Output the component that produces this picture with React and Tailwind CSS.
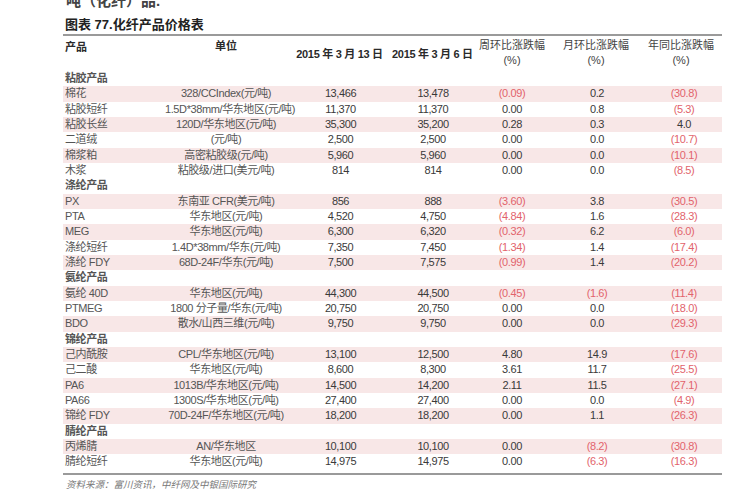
const sections = [
  {
    name: "粘胶产品",
    rows: [
      ["棉花", "328/CCIndex(元/吨)", "13,466", "13,478", "(0.09)", "0.2", "(30.8)"],
      ["粘胶短纤", "1.5D*38mm/华东地区(元/吨)", "11,370", "11,370", "0.00", "0.8", "(5.3)"],
      ["粘胶长丝", "120D/华东地区(元/吨)", "35,300", "35,200", "0.28", "0.3", "4.0"],
      ["二道绒", "(元/吨)", "2,500", "2,500", "0.00", "0.0", "(10.7)"],
      ["棉浆粕", "高密粘胶级(元/吨)", "5,960", "5,960", "0.00", "0.0", "(10.1)"],
      ["木浆", "粘胶级/进口(美元/吨)", "814", "814", "0.00", "0.0", "(8.5)"],
    ],
  },
  {
    name: "涤纶产品",
    rows: [
      ["PX", "东南亚 CFR(美元/吨)", "856", "888", "(3.60)", "3.8", "(30.5)"],
      ["PTA", "华东地区(元/吨)", "4,520", "4,750", "(4.84)", "1.6", "(28.3)"],
      ["MEG", "华东地区(元/吨)", "6,300", "6,320", "(0.32)", "6.2", "(6.0)"],
      ["涤纶短纤", "1.4D*38mm/华东(元/吨)", "7,350", "7,450", "(1.34)", "1.4", "(17.4)"],
      ["涤纶 FDY", "68D-24F/华东(元/吨)", "7,500", "7,575", "(0.99)", "1.4", "(20.2)"],
    ],
  },
  {
    name: "氨纶产品",
    rows: [
      ["氨纶 40D", "华东地区(元/吨)", "44,300", "44,500", "(0.45)", "(1.6)", "(11.4)"],
      ["PTMEG", "1800 分子量/华东(元/吨)", "20,750", "20,750", "0.00", "0.0", "(18.0)"],
      ["BDO", "散水/山西三维(元/吨)", "9,750", "9,750", "0.00", "0.0", "(29.3)"],
    ],
  },
  {
    name: "锦纶产品",
    rows: [
      ["己内酰胺", "CPL/华东地区(元/吨)", "13,100", "12,500", "4.80", "14.9", "(17.6)"],
      ["己二酸", "华东地区(元/吨)", "8,600", "8,300", "3.61", "11.7", "(25.5)"],
      ["PA6", "1013B/华东地区(元/吨)", "14,500", "14,200", "2.11", "11.5", "(27.1)"],
      ["PA66", "1300S/华东地区(元/吨)", "27,400", "27,400", "0.00", "0.0", "(4.9)"],
      ["锦纶 FDY", "70D-24F/华东地区(元/吨)", "18,200", "18,200", "0.00", "1.1", "(26.3)"],
    ],
  },
  {
    name: "腈纶产品",
    rows: [
      ["丙烯腈", "AN/华东地区", "10,100", "10,100", "0.00", "(8.2)", "(30.8)"],
      ["腈纶短纤", "华东地区(元/吨)", "14,975", "14,975", "0.00", "(6.3)", "(16.3)"],
    ],
  },
];

const grid = "grid grid-cols-[102px_122px_105px_80px_80px_88px_82px]";

const Cell = ({ v, className = "" }) => (
  <span className={`text-center ${v.startsWith("(") ? "text-[#e2636c]" : "text-[#3a3a3a]"} ${className}`}>{v}</span>
);

const App = () => {
  return (
    <div className="w-[750px] h-[500px] overflow-hidden bg-white pl-[63px] font-['Liberation_Sans','Noto_Sans_CJK_SC',sans-serif]">
      <div className="-mt-[9px] h-[19px] pl-[3px] text-[15px] font-bold text-[#444] leading-[19px]">
        吨（化纤）品.
      </div>
      <div className="h-[14px] pl-[2px] text-[13px] font-bold text-[#222] leading-[14px] mt-[8px]">
        图表 77.化纤产品价格表
      </div>
      <div className="w-[659px] h-[2px] bg-[#9a9a9a] mt-[2px]" />
      <div className={`${grid} h-[35px] text-[11px] font-bold text-[#2a2a2a] leading-[15px]`}>
        <span className="pl-[2px] pt-[4px]">产品</span>
        <span className="text-center pt-[3px]">单位</span>
        <span className="text-center self-center whitespace-nowrap tracking-[-0.3px] pt-[2px]">2015 年 3 月 13 日</span>
        <span className="text-center self-center whitespace-nowrap tracking-[-0.3px] pt-[2px]">2015 年 3 月 6 日</span>
        <span className="text-center pt-[2px] font-normal text-[#444]">周环比涨跌幅<br />(%)</span>
        <span className="text-center pt-[2px] font-normal text-[#444]">月环比涨跌幅<br />(%)</span>
        <span className="text-center pt-[2px] font-normal text-[#444]">年同比涨跌幅<br />(%)</span>
      </div>
      <div className="w-[659px] text-[11px] leading-[15.33px] tracking-[-0.4px]">
        {sections.map((s) => (
          <div key={s.name}>
            <div className={`${grid} h-[15.33px]`}>
              <span className="pl-[2px] font-bold text-[#555]">{s.name}</span>
            </div>
            {s.rows.map((r, i) => (
              <div key={r[0]} className={`${grid} h-[15.33px] ${i % 2 === 0 ? "bg-[#f8e7e7]" : "bg-white"}`}>
                <span className="pl-[2px] text-[#555] whitespace-nowrap">{r[0]}</span>
                <span className="text-center text-[#555] whitespace-nowrap">{r[1]}</span>
                <Cell v={r[2]} className="pl-[2px]" />
                <Cell v={r[3]} className="pl-[2px]" />
                <Cell v={r[4]} />
                <Cell v={r[5]} className="pl-[2px]" />
                <Cell v={r[6]} className="pl-[6px]" />
              </div>
            ))}
          </div>
        ))}
      </div>
      <div className="w-[659px] h-[2px] bg-[#9a9a9a] mt-[3px]" />
      <div className="pl-[3px] mt-[4px] text-[9.5px] italic text-[#777] leading-[12px]">
        资料来源：富川资讯，中纤网及中银国际研究
      </div>
    </div>
  );
};

export default App;
